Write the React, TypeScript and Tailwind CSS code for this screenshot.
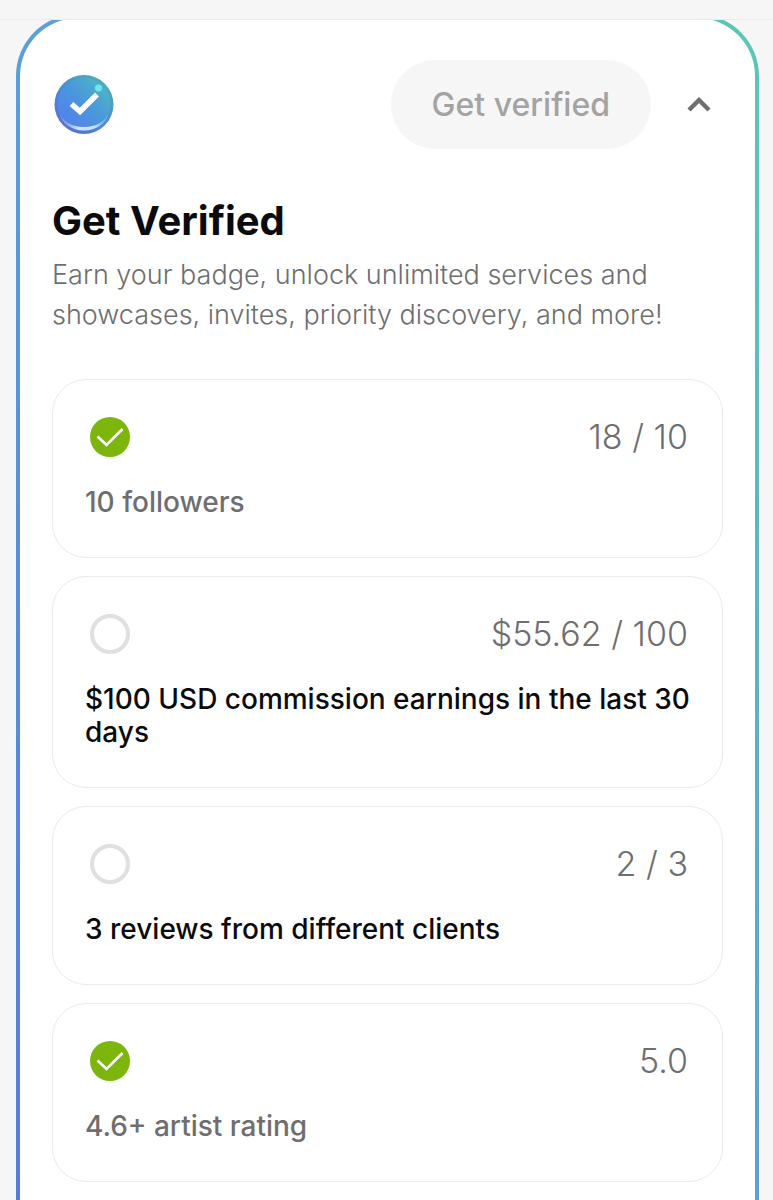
import { ChevronUp } from "lucide-react";

type Requirement = {
  label: string;
  progress: string;
  done: boolean;
};

const requirements: Requirement[] = [
  { label: "10 followers", progress: "18 / 10", done: true },
  {
    label: "$100 USD commission earnings in the last 30 days",
    progress: "$55.62 / 100",
    done: false,
  },
  {
    label: "3 reviews from different clients",
    progress: "2 / 3",
    done: false,
  },
  { label: "4.6+ artist rating", progress: "5.0", done: true },
];

function VerifiedBadge() {
  return (
    <svg viewBox="0 0 60 60" className="h-15 w-15" aria-hidden="true">
      <defs>
        <linearGradient id="badge-rim" x1="0.85" y1="0.1" x2="0.25" y2="0.9">
          <stop offset="0" stopColor="#4cadb5" />
          <stop offset="0.5" stopColor="#4a8fcd" />
          <stop offset="1" stopColor="#5674cf" />
        </linearGradient>
        <linearGradient id="badge-face" x1="0.95" y1="0.2" x2="0.25" y2="0.85">
          <stop offset="0" stopColor="#4bb6c6" />
          <stop offset="0.5" stopColor="#4b98dc" />
          <stop offset="1" stopColor="#5285e8" />
        </linearGradient>
        <linearGradient id="badge-shine" x1="0" y1="0" x2="1" y2="0">
          <stop offset="0" stopColor="#b9d4fa" stopOpacity="0.1" />
          <stop offset="0.4" stopColor="#cfe3fd" />
          <stop offset="0.7" stopColor="#c3e6f8" />
          <stop offset="1" stopColor="#a5dff0" stopOpacity="0.1" />
        </linearGradient>
      </defs>
      <circle cx="30" cy="29.5" r="29.5" fill="url(#badge-rim)" />
      <circle cx="30" cy="29" r="26.5" fill="url(#badge-face)" />
      <path
        d="M4 37C8 49 18 55.5 30 55.5S52 49 56 37C51 47 42 52 30 52S9 47 4 37Z"
        fill="url(#badge-shine)"
      />
      <circle cx="17" cy="17" r="4" fill="#3f9ddd" opacity="0.7" />
      <circle cx="22.5" cy="24" r="1.8" fill="#429be2" opacity="0.8" />
      <circle cx="44.5" cy="13" r="3.5" fill="#73e5ee" />
      <path
        d="M17.5 29L26 36.5L43 19.5"
        fill="none"
        stroke="#fff"
        strokeWidth="5.5"
      />
    </svg>
  );
}

function StatusIcon({ done }: { done: boolean }) {
  if (!done) {
    return (
      <svg viewBox="0 0 40 40" className="h-10 w-10" role="img" aria-label="Incomplete">
        <circle cx="20" cy="20" r="18" fill="none" stroke="#e0e0e2" strokeWidth="4" />
      </svg>
    );
  }

  return (
    <svg viewBox="0 0 40 40" className="h-10 w-10" role="img" aria-label="Complete">
      <circle cx="20" cy="20" r="20" fill="#7cb50c" />
      <path d="M7.5 19.5L16.5 28L32.5 12" fill="none" stroke="#fff" strokeWidth="2.6" />
    </svg>
  );
}

function RequirementCard({ label, progress, done }: Requirement) {
  return (
    <li className="rounded-[34px] border border-[#ebebed] px-8 pt-8 pb-[38px]">
      <div className="flex h-[50px] items-center justify-between pr-0.5 pl-[5px]">
        <StatusIcon done={done} />
        <span className="text-[34px] leading-10 font-light text-[#6e6e70]">{progress}</span>
      </div>
      <p
        className={`mt-6 text-[28px] leading-[33px] font-medium ${
          done ? "text-[#6e6e70]" : "text-[#0b0b0d]"
        }`}
      >
        {label}
      </p>
    </li>
  );
}

export default function App() {
  return (
    <div className="flex h-screen flex-col overflow-hidden bg-[#f6f6f6] font-['Inter',sans-serif]">
      <header className="h-5 shrink-0 border-b border-[#ebebeb]" />
      <main className="min-h-0 flex-1 overflow-hidden pr-3.5 pl-4">
        <section className="-mt-1.5 rounded-[62px] bg-linear-to-bl from-[#5bc8b5] via-[#5b9fd9] to-[#5a78d8] p-1">
          <div className="rounded-[58px] bg-white px-8 pt-[42px] pb-20">
            <div className="flex items-center justify-between pr-1 pl-0.5">
              <VerifiedBadge />
              <div className="flex items-center gap-7">
                <button
                  type="button"
                  disabled
                  className="h-[89px] rounded-full bg-[#f6f6f6] px-[41px] text-[32px] font-medium text-[#a3a3a3]"
                >
                  Get verified
                </button>
                <button type="button" aria-label="Collapse" className="text-[#6e6e70]">
                  <ChevronUp
                    className="h-10 w-10"
                    strokeWidth={2.6}
                    strokeLinecap="butt"
                    strokeLinejoin="miter"
                  />
                </button>
              </div>
            </div>

            <h1 className="mt-12 text-[40px] leading-[48px] font-bold text-[#0b0b0d]">
              Get Verified
            </h1>
            <p className="mt-2.5 text-[27px] leading-10 font-light text-[#6e6e70]">
              Earn your badge, unlock unlimited services and showcases, invites,
              priority discovery, and more!
            </p>

            <ul className="mt-11 flex flex-col gap-[18px]">
              {requirements.map((item) => (
                <RequirementCard key={item.label} {...item} />
              ))}
            </ul>
          </div>
        </section>
      </main>
    </div>
  );
}
